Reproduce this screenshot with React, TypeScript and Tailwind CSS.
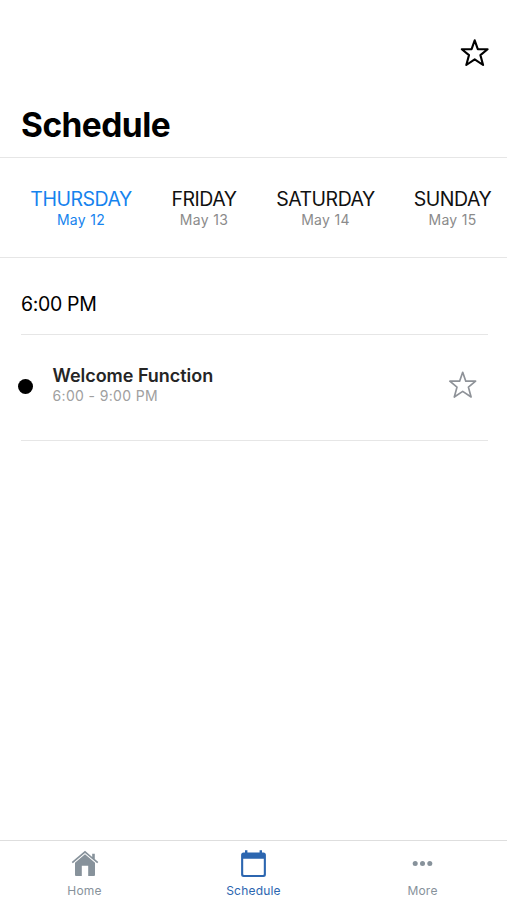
import { useState } from 'react';
import clsx from 'clsx';

const days = [
  { name: 'THURSDAY', date: 'May 12', width: 'w-[102px]' },
  { name: 'FRIDAY', date: 'May 13', width: 'w-[66px]' },
  { name: 'SATURDAY', date: 'May 14', width: 'w-[99px]' },
  { name: 'SUNDAY', date: 'May 15', width: 'w-[77px]' },
];

function StarIcon({ className }: { className?: string }) {
  return (
    <svg viewBox="0 0 30 30" className={className} fill="none" stroke="currentColor" strokeLinejoin="round">
      <path d="M14.7 2.3L17.8 11.2H27.6L20.4 17.1L23.1 27L14.7 21.4L6.3 27L9 17.1L1.8 11.2H11.6Z" />
    </svg>
  );
}

function HomeIcon() {
  return (
    <svg viewBox="0 0 28 28" className="h-7 w-7" fill="currentColor">
      <path d="M14 0.8L0.7 12L1.8 13.2L14 3L26.2 13.2L27.3 12L23.8 9V3.8H21.2V6.9Z" />
      <path d="M14 4.3L4 12.7V25Q4 26 5 26H10.8V15.8H17.2V26H23Q24 26 24 25V12.7Z" />
    </svg>
  );
}

function CalendarIcon() {
  return (
    <svg viewBox="0 0 28 28" className="h-7 w-7" fill="currentColor">
      <path
        fillRule="evenodd"
        d="M5 0.2H7.4V2.4H19.6V0.2H22V2.4H23.4Q25.9 2.4 25.9 4.9V24.4Q25.9 26.9 23.4 26.9H3.6Q1.1 26.9 1.1 24.4V4.9Q1.1 2.4 3.6 2.4H5ZM3.2 8.7V24Q3.2 24.9 4 24.9H23Q23.8 24.9 23.8 24V8.7Z"
      />
    </svg>
  );
}

function MoreIcon() {
  return (
    <svg viewBox="0 0 28 28" className="h-7 w-7" fill="currentColor">
      <circle cx="6.2" cy="13.5" r="2.5" />
      <circle cx="13.5" cy="13.5" r="2.5" />
      <circle cx="20.8" cy="13.5" r="2.5" />
    </svg>
  );
}

const tabs = [
  { label: 'Home', icon: HomeIcon },
  { label: 'Schedule', icon: CalendarIcon },
  { label: 'More', icon: MoreIcon },
];

export default function App() {
  const [activeDay, setActiveDay] = useState('THURSDAY');
  const [activeTab, setActiveTab] = useState('Schedule');

  return (
    <div className="flex h-[900px] w-[507px] flex-col overflow-hidden bg-white font-['Inter','Liberation_Sans',sans-serif] text-black">
      <header className="flex h-[158px] shrink-0 flex-col border-b border-[#e6e6e6]">
        <div className="flex justify-end pt-[38px] pr-[17px]">
          <button aria-label="Favorites">
            <StarIcon className="h-[30px] w-[30px] stroke-[2.1]" />
          </button>
        </div>
        <h1 className="mt-[37px] pl-[21px] text-[33.5px] leading-[40px] font-bold tracking-[-0.55px]">Schedule</h1>
      </header>

      <nav className="flex h-[100px] shrink-0 gap-[39px] border-b border-[#e6e6e6] pt-[29px] pl-[30px]">
        {days.map((day) => (
          <button
            key={day.name}
            onClick={() => setActiveDay(day.name)}
            className={clsx(
              'flex shrink-0 flex-col items-center whitespace-nowrap',
              day.width,
              activeDay === day.name ? 'text-[#1683ee]' : 'text-[#111]'
            )}
          >
            <span className="text-[19.5px] leading-6 tracking-[-0.5px]">{day.name}</span>
            <span
              className={clsx('text-sm leading-[18px] tracking-[0.3px]', activeDay !== day.name && 'text-[#8b8b8b]')}
            >
              {day.date}
            </span>
          </button>
        ))}
      </nav>

      <main className="flex-1 pr-[19px] pl-[21px]">
        <h2 className="h-[77px] border-b border-[#e6e6e6] pt-[34px] text-[19.5px] leading-6 tracking-[-0.35px]">
          6:00 PM
        </h2>
        <div className="flex h-[106px] border-b border-[#e6e6e6]">
          <div className="mt-[44px] -ml-[3px] h-[15px] w-[15px] rounded-full bg-black" />
          <div className="ml-[19.5px] flex-1 pt-[29px]">
            <h3 className="text-lg leading-[23px] font-semibold tracking-[-0.03px] text-[#252525]">Welcome Function</h3>
            <p className="text-sm leading-[18px] tracking-[0.35px] text-[#a0a0a0]">6:00 - 9:00 PM</p>
          </div>
          <button aria-label="Add to favorites" className="mt-[35px] mr-[10px] h-[30px] text-[#8e9298]">
            <StarIcon className="h-[30px] w-[30px] stroke-[1.7]" />
          </button>
        </div>
      </main>

      <footer className="grid h-[60px] shrink-0 grid-cols-3 border-t border-[#dedede]">
        {tabs.map(({ label, icon: Icon }) => (
          <button
            key={label}
            onClick={() => setActiveTab(label)}
            className={clsx(
              'flex flex-col items-center pt-[9px]',
              activeTab === label ? 'text-[#2c66b0]' : 'text-[#87929b]'
            )}
          >
            <Icon />
            <span className="mt-[5px] text-xs leading-4 tracking-[0.2px]">{label}</span>
          </button>
        ))}
      </footer>
    </div>
  );
}
